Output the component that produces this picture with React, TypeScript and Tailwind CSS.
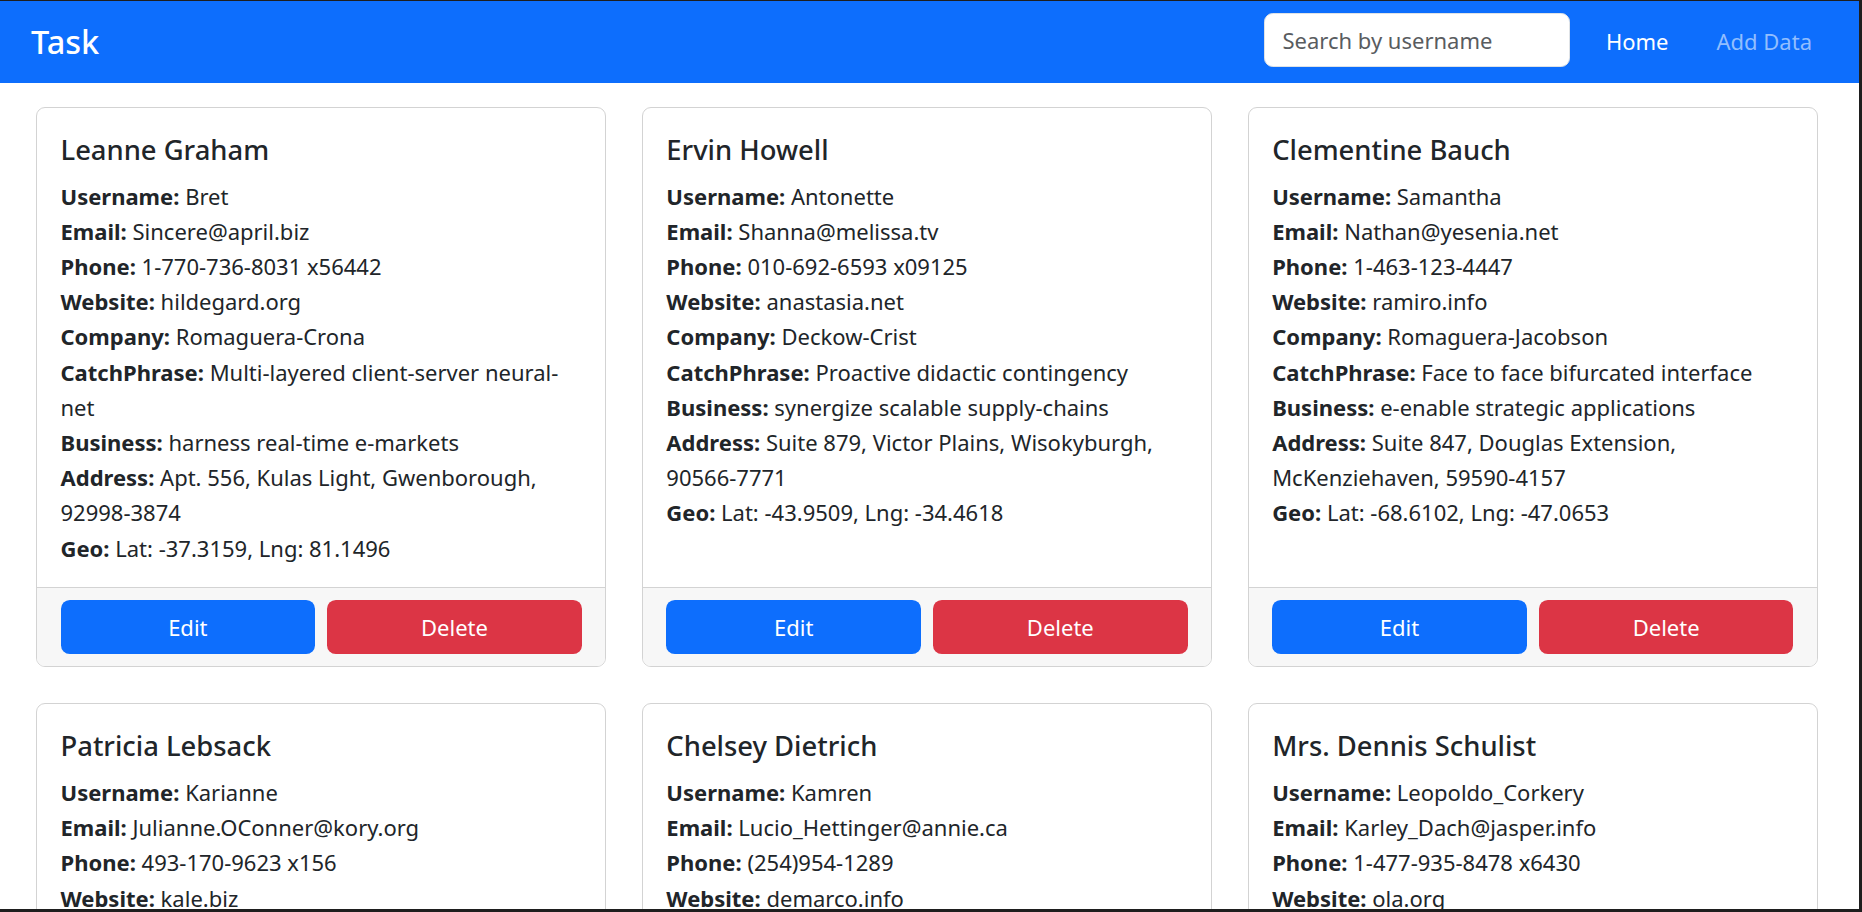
import React from "react";

type User = {
  name: string;
  username: string;
  email: string;
  phone: string;
  website: string;
  company: string;
  catchPhrase: string;
  bs: string;
  address: string;
  lat: string;
  lng: string;
};

const users: User[] = [
  {
    name: "Leanne Graham",
    username: "Bret",
    email: "Sincere@april.biz",
    phone: "1-770-736-8031 x56442",
    website: "hildegard.org",
    company: "Romaguera-Crona",
    catchPhrase: "Multi-layered client-server neural-net",
    bs: "harness real-time e-markets",
    address: "Apt. 556, Kulas Light, Gwenborough, 92998-3874",
    lat: "-37.3159",
    lng: "81.1496",
  },
  {
    name: "Ervin Howell",
    username: "Antonette",
    email: "Shanna@melissa.tv",
    phone: "010-692-6593 x09125",
    website: "anastasia.net",
    company: "Deckow-Crist",
    catchPhrase: "Proactive didactic contingency",
    bs: "synergize scalable supply-chains",
    address: "Suite 879, Victor Plains, Wisokyburgh, 90566-7771",
    lat: "-43.9509",
    lng: "-34.4618",
  },
  {
    name: "Clementine Bauch",
    username: "Samantha",
    email: "Nathan@yesenia.net",
    phone: "1-463-123-4447",
    website: "ramiro.info",
    company: "Romaguera-Jacobson",
    catchPhrase: "Face to face bifurcated interface",
    bs: "e-enable strategic applications",
    address: "Suite 847, Douglas Extension, McKenziehaven, 59590-4157",
    lat: "-68.6102",
    lng: "-47.0653",
  },
  {
    name: "Patricia Lebsack",
    username: "Karianne",
    email: "Julianne.OConner@kory.org",
    phone: "493-170-9623 x156",
    website: "kale.biz",
    company: "Robel-Corkery",
    catchPhrase: "Multi-tiered zero tolerance productivity",
    bs: "transition cutting-edge web services",
    address: "Apt. 692, Hoeger Mall, South Elvis, 53919-4257",
    lat: "29.4572",
    lng: "-164.2990",
  },
  {
    name: "Chelsey Dietrich",
    username: "Kamren",
    email: "Lucio_Hettinger@annie.ca",
    phone: "(254)954-1289",
    website: "demarco.info",
    company: "Keebler LLC",
    catchPhrase: "User-centric fault-tolerant solution",
    bs: "revolutionize end-to-end systems",
    address: "Suite 351, Skiles Walks, Roscoeview, 33263",
    lat: "-31.8129",
    lng: "62.5342",
  },
  {
    name: "Mrs. Dennis Schulist",
    username: "Leopoldo_Corkery",
    email: "Karley_Dach@jasper.info",
    phone: "1-477-935-8478 x6430",
    website: "ola.org",
    company: "Considine-Lockman",
    catchPhrase: "Synchronised bottom-line interface",
    bs: "e-enable innovative applications",
    address: "Suite 950, Norberto Crossing, South Christy, 23505-1337",
    lat: "-71.4197",
    lng: "71.7478",
  },
];

function Field({ label, value }: { label: string; value: string }) {
  return (
    <p className="m-0">
      <strong className="font-bold">{label}:</strong> {value}
    </p>
  );
}

function UserCard({ u }: { u: User }) {
  return (
    <div className="flex flex-col border border-[#d3d3d3] rounded-[9px] bg-white overflow-hidden">
      <div className="flex-1 px-[23.5px] pt-[23.5px] pb-[21.5px]">
        <h5 className="text-[27.4px] font-medium leading-[35.3px] mb-[11.8px] text-[#212529]">
          {u.name}
        </h5>
        <div className="text-[22px] leading-[35.2px] text-[#212529]">
          <Field label="Username" value={u.username} />
          <Field label="Email" value={u.email} />
          <Field label="Phone" value={u.phone} />
          <Field label="Website" value={u.website} />
          <Field label="Company" value={u.company} />
          <Field label="CatchPhrase" value={u.catchPhrase} />
          <Field label="Business" value={u.bs} />
          <Field label="Address" value={u.address} />
          <Field label="Geo" value={`Lat: ${u.lat}, Lng: ${u.lng}`} />
        </div>
      </div>
      <div className="bg-[#f7f7f7] border-t border-[#d3d3d3] px-[23.5px] py-[12px] grid grid-cols-2 gap-[12px]">
        <button className="h-[54px] rounded-[8.8px] bg-[#0d6efd] text-white text-[22px]">
          Edit
        </button>
        <button className="h-[54px] rounded-[8.8px] bg-[#dc3545] text-white text-[22px]">
          Delete
        </button>
      </div>
    </div>
  );
}

export default function App() {
  return (
    <div
      className="w-[1862px] h-[912px] overflow-hidden bg-white border-t border-r-[3px] border-b-[3px] border-[#1e1e1e] text-[#212529]"
      style={{ fontFamily: '"Noto Sans", "Open Sans", sans-serif' }}
    >
      <nav className="h-[82px] bg-[#0d6efd] flex items-center justify-between pl-[31px] pr-[47px]">
        <span className="text-white text-[32.5px] font-medium leading-[44px]">Task</span>
        <div className="flex items-center">
          <input
            type="text"
            placeholder="Search by username"
            className="w-[306px] h-[54px] mb-[5px] rounded-[8.8px] border border-[#dee2e6] bg-white px-[17.6px] text-[22px] text-[#212529] placeholder:text-[#595c5f] outline-none"
          />
          <a className="ml-[36px] text-white text-[22px] leading-[35.3px]">Home</a>
          <a className="ml-[48px] text-[#92befe] text-[22px] leading-[35.3px]">Add Data</a>
        </div>
      </nav>
      <main className="ml-[36px] w-[1782px] mt-[24px] grid grid-cols-3 gap-x-[35.5px] gap-y-[36px]">
        {users.map((u) => (
          <UserCard key={u.username} u={u} />
        ))}
      </main>
    </div>
  );
}
